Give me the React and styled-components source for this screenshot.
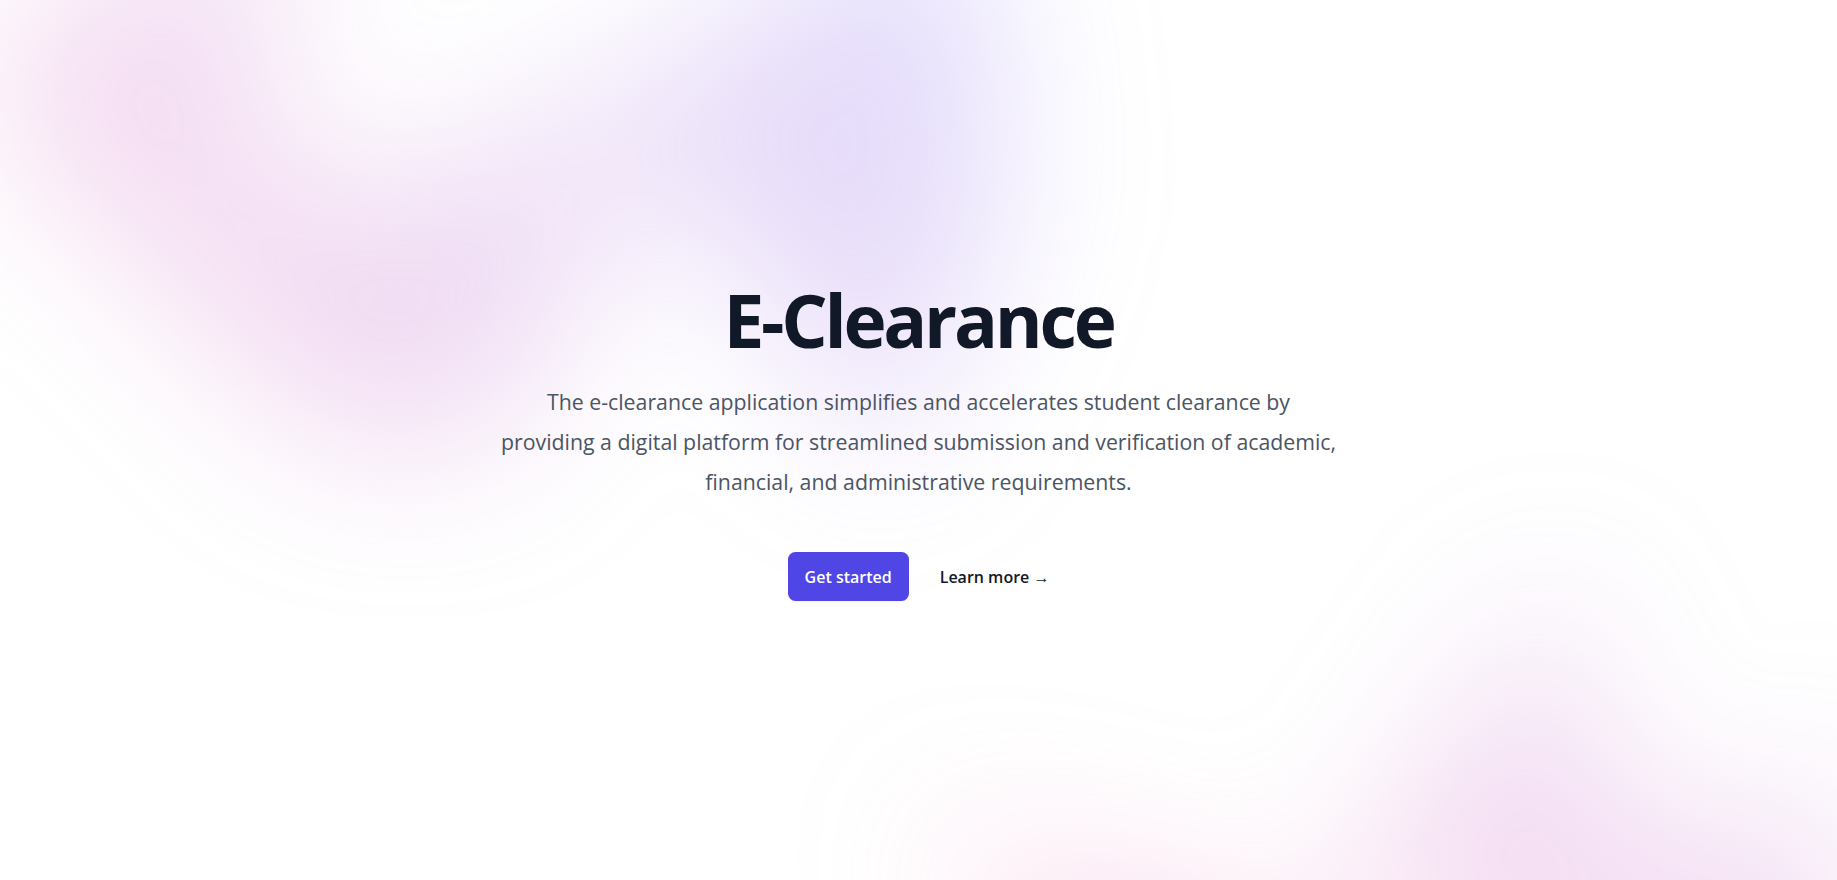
import React from "react";
import styled, { createGlobalStyle } from "styled-components";

const GlobalStyle = createGlobalStyle`
  body {
    margin: 0;
    background: #ffffff;
    font-family: "Open Sans", "Noto Sans", sans-serif;
    -webkit-font-smoothing: antialiased;
  }
`;

const blobShape =
  "polygon(74.1% 44.1%, 100% 61.6%, 97.5% 26.9%, 85.5% 0.1%, 80.7% 2%, 72.5% 32.5%, 60.2% 62.4%, 52.4% 68.1%, 47.5% 58.3%, 45.2% 34.5%, 27.5% 76.7%, 0.1% 64.9%, 17.9% 100%, 27.6% 76.8%, 76.1% 97.7%, 74.1% 44.1%)";

const Page = styled.div`
  position: relative;
  isolation: isolate;
  height: 880px;
  overflow: hidden;
  background: #ffffff;
`;

// decorative blurred shapes behind the hero
const BlobWrap = styled.div`
  position: absolute;
  left: 0;
  right: 0;
  top: ${p => p.$top};
  z-index: -1;
  overflow: hidden;
  filter: blur(80px);
  pointer-events: none;
`;

const Blob = styled.div`
  position: relative;
  left: ${p => p.$left};
  width: 1443.75px;
  aspect-ratio: 1155 / 678;
  transform: translateX(-50%) rotate(${p => p.$rotate || 0}deg);
  background: linear-gradient(to top right, #ff80b5, #9089fc);
  opacity: 0.3;
  clip-path: ${blobShape};
`;

const Hero = styled.main`
  max-width: 839px;
  margin: 0 auto;
  padding-top: 282px;
  display: flex;
  flex-direction: column;
  align-items: center;
  text-align: center;
`;

const Title = styled.h1`
  margin: 0;
  font-size: 73px;
  line-height: 75px;
  font-weight: 700;
  letter-spacing: -0.045em;
  color: #111827;
`;

const Lead = styled.p`
  margin: 25px 0 0;
  font-size: 21.3px;
  line-height: 40px;
  color: #4b5563;
`;

const Actions = styled.div`
  margin-top: 50px;
  display: flex;
  align-items: center;
  justify-content: center;
  gap: 31px;
`;

const PrimaryButton = styled.a`
  display: inline-flex;
  align-items: center;
  height: 49px;
  padding: 0 17px;
  border-radius: 7.5px;
  background: #4f46e5;
  color: #ffffff;
  font-size: 16px;
  font-weight: 600;
  text-decoration: none;
  box-shadow: 0 1px 2px rgba(0, 0, 0, 0.05);
  cursor: pointer;
`;

const TextLink = styled.a`
  font-size: 16px;
  font-weight: 600;
  line-height: 30px;
  color: #111827;
  text-decoration: none;
  cursor: pointer;
`;

export default function App() {
  return (
    <>
      <GlobalStyle />
      <Page>
        <BlobWrap $top="-400px" aria-hidden="true">
          <Blob $left="calc(50% - 600px)" $rotate={30} />
        </BlobWrap>
        <Hero>
          <Title>E-Clearance</Title>
          <Lead>
            The e-clearance application simplifies and accelerates student clearance by providing a digital
            platform for streamlined submission and verification of academic, financial, and administrative
            requirements.
          </Lead>
          <Actions>
            <PrimaryButton>Get started</PrimaryButton>
            <TextLink>
              Learn more <span aria-hidden="true">→</span>
            </TextLink>
          </Actions>
        </Hero>
        <BlobWrap $top="calc(100% - 600px)" aria-hidden="true">
          <Blob $left="calc(50% + 720px)" />
        </BlobWrap>
      </Page>
    </>
  );
}
